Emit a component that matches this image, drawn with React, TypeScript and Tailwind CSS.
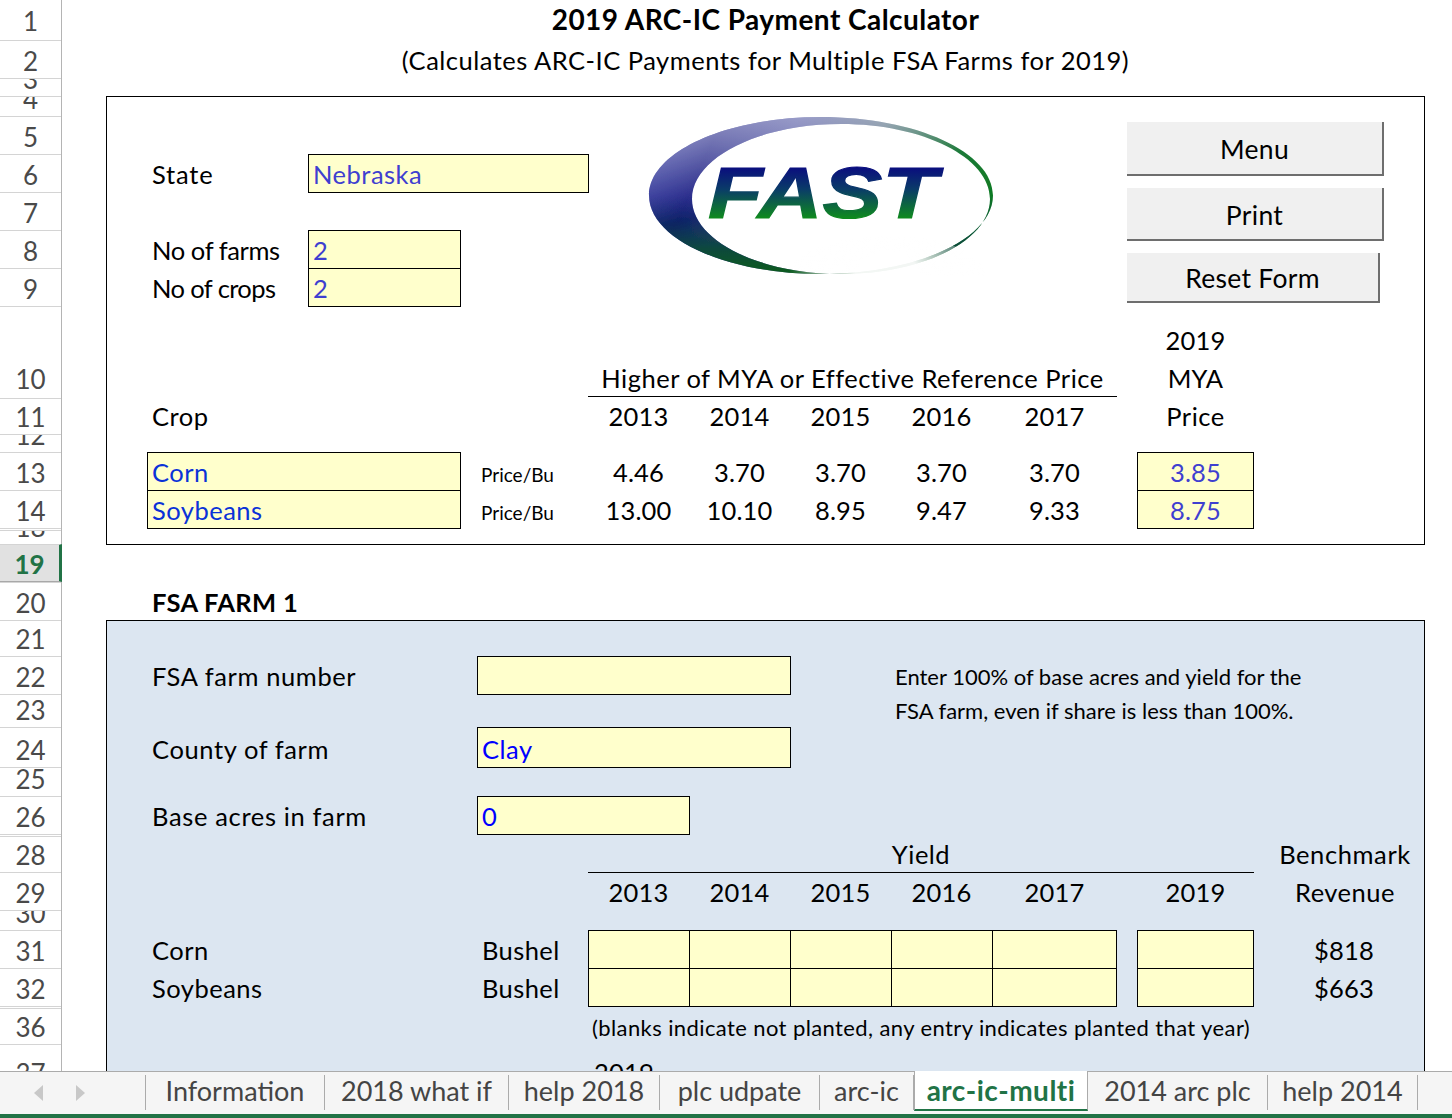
import type { ReactNode } from "react";
import { twMerge } from "tailwind-merge";

const rowHeaders = [
  { n: "1", h: "h-[40px]" },
  { n: "2", h: "h-[38px]" },
  { n: "3", h: "h-[18px]" },
  { n: "4", h: "h-[20px]" },
  { n: "5", h: "h-[38px]" },
  { n: "6", h: "h-[38px]" },
  { n: "7", h: "h-[38px]" },
  { n: "8", h: "h-[38px]" },
  { n: "9", h: "h-[38px]" },
  { n: "10", h: "h-[92px] pb-[2px]" },
  { n: "11", h: "h-[36px]" },
  { n: "12", h: "h-[18px]" },
  { n: "13", h: "h-[38px]" },
  { n: "14", h: "h-[38px]" },
  { n: "", h: "h-[2px]" },
  { n: "18", h: "h-[14px]" },
  { n: "19", h: "h-[38px]" },
  { n: "20", h: "h-[38px]" },
  { n: "21", h: "h-[36px]" },
  { n: "22", h: "h-[38px]" },
  { n: "23", h: "h-[33px]" },
  { n: "24", h: "h-[40px]" },
  { n: "25", h: "h-[29px]" },
  { n: "26", h: "h-[38px]" },
  { n: "", h: "h-[2px]" },
  { n: "28", h: "h-[36px]" },
  { n: "29", h: "h-[38px]" },
  { n: "30", h: "h-[20px]" },
  { n: "31", h: "h-[38px]" },
  { n: "32", h: "h-[38px]" },
  { n: "", h: "h-[2px]" },
  { n: "36", h: "h-[36px]" },
  { n: "37", h: "h-[46px]" },
];

const yearCols = [
  { year: "2013", col: "col-start-7", corn: "4.46", soy: "13.00" },
  { year: "2014", col: "col-start-8", corn: "3.70", soy: "10.10" },
  { year: "2015", col: "col-start-9", corn: "3.70", soy: "8.95" },
  { year: "2016", col: "col-start-10", corn: "3.70", soy: "9.47" },
  { year: "2017", col: "col-start-11", corn: "3.70", soy: "9.33" },
];

const tabs = [
  { label: "Information", w: "w-[179px]" },
  { label: "2018 what if", w: "w-[184px]" },
  { label: "help 2018", w: "w-[151px]" },
  { label: "plc udpate", w: "w-[160px]" },
  { label: "arc-ic", w: "w-[94px]" },
  { label: "arc-ic-multi", w: "w-[174px]", active: true },
  { label: "2014 arc plc", w: "w-[180px]" },
  { label: "help 2014", w: "w-[150px]" },
];

function Cell({ className, children }: { className?: string; children?: ReactNode }) {
  return (
    <div className={twMerge("flex items-end whitespace-nowrap text-[25.5px] leading-[36px] tracking-[0.5px] text-black", className)}>
      {children}
    </div>
  );
}

function Input({ className, children }: { className?: string; children?: ReactNode }) {
  return (
    <div className={twMerge("-mb-px flex items-end whitespace-nowrap border border-black bg-[#ffffcc] pl-[4px] text-[25.5px] leading-[36px] tracking-[0.5px]", className)}>
      {children}
    </div>
  );
}

function FastLogo() {
  const crescent =
    "M173 1 C78 1 1 36 1 79.5 C1 123 78 158 173 158 C268 158 345 123 345 79.5 C345 36 268 1 173 1 Z " +
    "M193 8 C110.7 8 44 41.6 44 83 C44 124.4 110.7 158 193 158 C275.3 158 342 124.4 342 83 C342 41.6 275.3 8 193 8 Z";
  return (
    <div className="col-[7/12] row-[4/10]">
      <svg width="346" height="160" viewBox="0 0 346 160" className="ml-[60px] mt-[20px]">
        <defs>
          <linearGradient id="ringBase" x1="0" y1="0.35" x2="1" y2="0.55">
            <stop offset="0" stopColor="#141a8c" />
            <stop offset="0.14" stopColor="#0c0f7c" />
            <stop offset="0.35" stopColor="#4a4f9e" />
            <stop offset="0.6" stopColor="#6f8396" />
            <stop offset="0.85" stopColor="#1c7a38" />
            <stop offset="1" stopColor="#0f7a22" />
          </linearGradient>
          <linearGradient id="ringBottom" x1="0" y1="0" x2="0" y2="1">
            <stop offset="0.5" stopColor="#0b2a5a" stopOpacity="0" />
            <stop offset="0.85" stopColor="#0c4a3a" stopOpacity="1" />
            <stop offset="1" stopColor="#0e5c1e" stopOpacity="1" />
          </linearGradient>
          <linearGradient id="ringTop" x1="0" y1="0" x2="0.3" y2="0.55">
            <stop offset="0" stopColor="#ffffff" stopOpacity="0.65" />
            <stop offset="1" stopColor="#ffffff" stopOpacity="0" />
          </linearGradient>
          <radialGradient id="ringFade" gradientUnits="userSpaceOnUse" cx="240" cy="170" r="100">
            <stop offset="0.35" stopColor="#ffffff" stopOpacity="0.95" />
            <stop offset="1" stopColor="#ffffff" stopOpacity="0" />
          </radialGradient>
          <linearGradient id="fastFill" gradientUnits="userSpaceOnUse" x1="0" y1="50" x2="0" y2="102">
            <stop offset="0" stopColor="#0a0a80" />
            <stop offset="0.45" stopColor="#0a3c68" />
            <stop offset="1" stopColor="#0f8a1e" />
          </linearGradient>
          <filter id="soft" x="-2%" y="-2%" width="104%" height="104%">
            <feGaussianBlur stdDeviation="0.7" />
          </filter>
        </defs>
        <g filter="url(#soft)">
          <path d={crescent} fillRule="evenodd" fill="url(#ringBase)" />
          <path d={crescent} fillRule="evenodd" fill="url(#ringBottom)" />
          <path d={crescent} fillRule="evenodd" fill="url(#ringTop)" />
          <ellipse cx="240" cy="160" rx="100" ry="40" fill="url(#ringFade)" />
        </g>
        <text
          x="60"
          y="102"
          fontFamily="'Liberation Sans', sans-serif"
          fontWeight="700"
          fontStyle="italic"
          fontSize="73"
          textLength="229"
          lengthAdjust="spacingAndGlyphs"
          fill="url(#fastFill)"
          stroke="url(#fastFill)"
          strokeWidth="1.2"
        >
          FAST
        </text>
      </svg>
    </div>
  );
}

function SheetButton({ className, children }: { className?: string; children?: ReactNode }) {
  return (
    <div className={twMerge("flex items-center justify-center border-r-2 border-b-2 border-[#6e6e6e] bg-[#f0f0f0] pt-[4px] text-[26.5px] tracking-[0.3px] text-black", className)}>
      {children}
    </div>
  );
}

export default function App() {
  return (
    <div className="flex h-[1118px] w-[1452px] flex-col overflow-hidden bg-white font-['Lato','Liberation_Sans',sans-serif]">
      <div className="flex h-[1071px] overflow-hidden">
        {/* Row numbers */}
        <div className="w-[62px] shrink-0 border-r border-[#b4b4b4]">
          {rowHeaders.map((r, i) => {
            const selected = r.n === "19";
            return (
              <div
                key={i}
                className={twMerge(
                  "flex items-end justify-center overflow-hidden border-[#d4d4d4] text-[26px] leading-[34px] text-[#4a4a4a]",
                  i > 0 && "border-t",
                  i === 0 && "pb-[2px]",
                  r.h,
                  selected && "-mr-px border-r-[3px] border-b border-r-[#217346] border-b-[#a8a8a8] bg-[#e1e1e1] font-bold text-[#217346]"
                )}
              >
                {r.n}
              </div>
            );
          })}
        </div>

        {/* Sheet cells */}
        <div className="grid h-[1090px] flex-1 grid-cols-[44px_41px_161px_153px_16px_111px_101px_101px_101px_101px_125px_20px_117px_171px_27px] grid-rows-[40px_38px_18px_20px_38px_38px_38px_38px_38px_92px_36px_18px_38px_38px_2px_14px_38px_38px_36px_38px_33px_40px_29px_38px_2px_36px_38px_20px_38px_38px_2px_36px_46px]">
          <Cell className="col-[2/15] row-start-1 justify-center text-[28px] font-bold tracking-[0.45px]">2019 ARC-IC Payment Calculator</Cell>
          <Cell className="col-[2/15] row-start-2 justify-center">(Calculates ARC-IC Payments for Multiple FSA Farms for 2019)</Cell>

          {/* Prices frame */}
          <div className="col-[2/15] row-[4/17] -mb-px border border-black" />
          <FastLogo />
          <div className="col-[12/15] row-[4/10] flex flex-col gap-[12px] pt-[26px] pl-[10px]">
            <SheetButton className="h-[54px] w-[257px]">Menu</SheetButton>
            <SheetButton className="h-[53px] w-[257px]">Print</SheetButton>
            <SheetButton className="h-[50px] w-[253px]">Reset Form</SheetButton>
          </div>

          <Cell className="col-start-3 row-start-6 pl-[5px] tracking-[0.8px]">State</Cell>
          <Input className="col-[4/7] row-start-6 -mr-px text-[#3f3fd0]">Nebraska</Input>
          <Cell className="col-start-3 row-start-8 pl-[5px] tracking-[-0.4px]">No of farms</Cell>
          <Input className="col-start-4 row-start-8 text-[#3f3fd0]">2</Input>
          <Cell className="col-start-3 row-start-9 pl-[5px] tracking-[-0.6px]">No of crops</Cell>
          <Input className="col-start-4 row-start-9 text-[#3f3fd0]">2</Input>

          <Cell className="col-[7/12] row-start-10 mb-px justify-center border-b border-black">Higher of MYA or Effective Reference Price</Cell>
          <div className="col-start-13 row-start-10 flex flex-col items-center justify-end pb-px text-[25.5px] leading-[38px] tracking-[0.2px] text-black">
            <span>2019</span>
            <span>MYA</span>
          </div>
          <Cell className="col-start-3 row-start-11 pl-[5px]">Crop</Cell>
          <Cell className="col-start-13 row-start-11 justify-center">Price</Cell>

          <Input className="col-[3/5] row-start-13 text-[#0a32d8]">Corn</Input>
          <Input className="col-[3/5] row-start-14 text-[#0a32d8]">Soybeans</Input>
          <Cell className="col-[5/7] row-start-13 pb-px pl-[20px] text-[19px] tracking-normal">Price/Bu</Cell>
          <Cell className="col-[5/7] row-start-14 pb-px pl-[20px] text-[19px] tracking-normal">Price/Bu</Cell>

          {yearCols.map((y) => (
            <Cell key={y.year} className={twMerge(y.col, "row-start-11 justify-center tracking-[0.2px]")}>{y.year}</Cell>
          ))}
          {yearCols.map((y) => (
            <Cell key={y.year} className={twMerge(y.col, "row-start-13 justify-center tracking-[0.2px]")}>{y.corn}</Cell>
          ))}
          {yearCols.map((y) => (
            <Cell key={y.year} className={twMerge(y.col, "row-start-14 justify-center tracking-[0.2px]")}>{y.soy}</Cell>
          ))}
          <Input className="col-start-13 row-start-13 justify-center pl-0 tracking-[0.2px] text-[#3f3fd0]">3.85</Input>
          <Input className="col-start-13 row-start-14 justify-center pl-0 tracking-[0.2px] text-[#3f3fd0]">8.75</Input>

          <Cell className="col-start-3 row-start-18 pl-[5px] font-bold tracking-[0.3px]">FSA FARM 1</Cell>

          {/* Farm panel */}
          <div className="col-[2/15] row-[19/34] border border-black bg-[#dce6f1]" />

          <Cell className="col-[3/6] row-start-20 pl-[5px] tracking-[0.6px]">FSA farm number</Cell>
          <Input className="col-[6/9] row-start-20 -mr-px" />
          <Cell className="col-start-10 row-start-20 pb-px pl-[4px] text-[22px] tracking-normal">Enter 100% of base acres and yield for the</Cell>
          <Cell className="col-start-10 row-start-21 pl-[4px] text-[22px] tracking-normal">FSA farm, even if share is less than 100%.</Cell>

          <Cell className="col-[3/6] row-start-22 pl-[5px] tracking-[0.6px]">County of farm</Cell>
          <Input className="col-[6/9] row-start-22 -mr-px text-[#0000ff]">Clay</Input>

          <Cell className="col-[3/6] row-start-24 pl-[5px] tracking-[0.65px]">Base acres in farm</Cell>
          <Input className="col-[6/8] row-start-24 -mr-px text-[#0000ff]">0</Input>

          <Cell className="col-[7/14] row-start-26 -mb-px justify-center border-b border-black">Yield</Cell>
          <Cell className="col-start-14 row-start-26 justify-center pl-[11px] tracking-[0.6px]">Benchmark</Cell>
          {yearCols.map((y) => (
            <Cell key={y.year} className={twMerge(y.col, "row-start-27 justify-center tracking-[0.2px]")}>{y.year}</Cell>
          ))}
          <Cell className="col-start-13 row-start-27 justify-center tracking-[0.2px]">2019</Cell>
          <Cell className="col-start-14 row-start-27 justify-center pl-[11px]">Revenue</Cell>

          <Cell className="col-start-3 row-start-29 pl-[5px]">Corn</Cell>
          <Cell className="col-start-3 row-start-30 pl-[5px]">Soybeans</Cell>
          <Cell className="col-start-6 row-start-29 pl-[5px] tracking-[0.4px]">Bushel</Cell>
          <Cell className="col-start-6 row-start-30 pl-[5px] tracking-[0.4px]">Bushel</Cell>
          {yearCols.map((y) => (
            <Input key={y.year} className={twMerge(y.col, "row-start-29", y.year !== "2017" && "-mr-px")} />
          ))}
          {yearCols.map((y) => (
            <Input key={y.year} className={twMerge(y.col, "row-start-30", y.year !== "2017" && "-mr-px")} />
          ))}
          <Input className="col-start-13 row-start-29" />
          <Input className="col-start-13 row-start-30" />
          <Cell className="col-start-14 row-start-29 justify-center pl-[9px] tracking-[0.2px]">$818</Cell>
          <Cell className="col-start-14 row-start-30 justify-center pl-[9px] tracking-[0.2px]">$663</Cell>

          <Cell className="col-start-7 row-start-32 pl-[4px] text-[22px] tracking-[0.4px]">(blanks indicate not planted, any entry indicates planted that year)</Cell>
          <Cell className="col-start-7 row-start-33 pl-[6px] tracking-[0.2px]">2019</Cell>
        </div>
      </div>

      {/* Sheet tabs */}
      <div className="flex h-[47px] shrink-0 flex-col bg-[#f5f5f5]">
        <div className="flex h-[43px] items-stretch">
          <div className="w-[146px] border-t border-[#ababab] pt-[3px] pb-[4px]">
            <div className="flex h-full items-center gap-[33px] border-r border-[#ababab] pl-[34px]">
              <svg width="9" height="16" viewBox="0 0 9 16"><polygon points="9,0 9,16 0,8" fill="#c8c8c8" /></svg>
              <svg width="9" height="16" viewBox="0 0 9 16"><polygon points="0,0 0,16 9,8" fill="#c8c8c8" /></svg>
            </div>
          </div>
          {tabs.map((t) =>
            t.active ? (
              <div
                key={t.label}
                className={twMerge(t.w, "flex h-[40px] items-center justify-center border-x border-b-[2px] border-x-[#ababab] border-b-[#217346] bg-white text-[28px] font-bold tracking-[0.5px] text-[#217346]")}
              >
                {t.label}
              </div>
            ) : (
              <div key={t.label} className={twMerge(t.w, "border-t border-[#ababab] pt-[3px] pb-[4px]")}>
                <div className="flex h-full items-center justify-center border-r border-[#ababab] pb-[3px] text-[27px] text-[#444444]">
                  {t.label}
                </div>
              </div>
            )
          )}
          <div className="flex-1 border-t border-[#ababab]" />
        </div>
        <div className="h-[4px] bg-[#217346]" />
      </div>
    </div>
  );
}
